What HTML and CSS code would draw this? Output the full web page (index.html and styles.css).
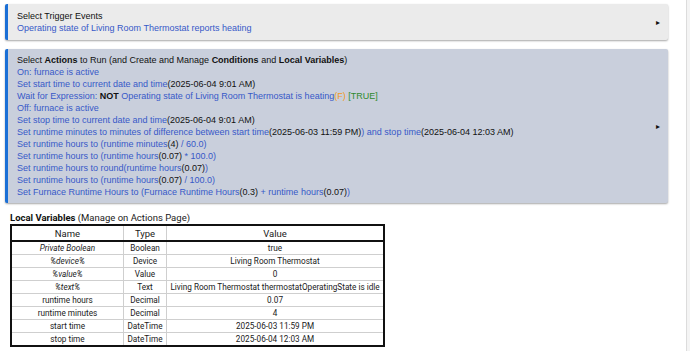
FILE: index.html
```html
<!DOCTYPE html>
<html lang="en">
<head>
    <meta charset="UTF-8">
    <meta name="viewport" content="width=device-width, initial-scale=1.0">
    <title>Rule Machine</title>
    <link rel="stylesheet" href="styles.css">
</head>
<body>
    <div class="page">
        <div class="panel trigger">
            <div class="panel-body">
                <div class="title">Select Trigger Events</div>
                <div class="blue">Operating state of Living Room Thermostat reports heating</div>
            </div>
            <span class="arrow">&#9656;</span>
        </div>

        <div class="panel actions">
            <div class="panel-body">
                <div class="title">Select <b>Actions</b> to Run (and Create and Manage <b>Conditions</b> and <b>Local Variables</b>)</div>
                <div class="blue">On: furnace is active</div>
                <div class="blue">Set start time to current date and time<span class="val">(2025-06-04 9:01 AM)</span></div>
                <div class="blue">Wait for Expression: <b>NOT</b> Operating state of Living Room Thermostat is heating<span class="orange">(F)</span> <span class="green">[TRUE]</span></div>
                <div class="blue">Off: furnace is active</div>
                <div class="blue">Set stop time to current date and time<span class="val">(2025-06-04 9:01 AM)</span></div>
                <div class="blue">Set runtime minutes to minutes of difference between start time<span class="val">(2025-06-03 11:59 PM)</span>) and stop time<span class="val">(2025-06-04 12:03 AM)</span></div>
                <div class="blue">Set runtime hours to (runtime minutes<span class="val">(4)</span> / 60.0)</div>
                <div class="blue">Set runtime hours to (runtime hours<span class="val">(0.07)</span> * 100.0)</div>
                <div class="blue">Set runtime hours to round(runtime hours<span class="val">(0.07)</span>)</div>
                <div class="blue">Set runtime hours to (runtime hours<span class="val">(0.07)</span> / 100.0)</div>
                <div class="blue">Set Furnace Runtime Hours to (Furnace Runtime Hours<span class="val">(0.3)</span> + runtime hours<span class="val">(0.07)</span>)</div>
            </div>
            <span class="arrow">&#9656;</span>
        </div>

        <div class="vars">
            <div class="vars-label"><b>Local Variables</b> (Manage on Actions Page)</div>
            <table class="vars-table">
                <thead>
                    <tr><th class="c-name">Name</th><th class="c-type">Type</th><th>Value</th></tr>
                </thead>
                <tbody>
                    <tr><td><i>Private Boolean</i></td><td>Boolean</td><td>true</td></tr>
                    <tr><td><i>%device%</i></td><td>Device</td><td>Living Room Thermostat</td></tr>
                    <tr><td><i>%value%</i></td><td>Value</td><td>0</td></tr>
                    <tr><td><i>%text%</i></td><td>Text</td><td>Living Room Thermostat thermostatOperatingState is idle</td></tr>
                    <tr><td>runtime hours</td><td>Decimal</td><td>0.07</td></tr>
                    <tr><td>runtime minutes</td><td>Decimal</td><td>4</td></tr>
                    <tr><td>start time</td><td>DateTime</td><td>2025-06-03 11:59 PM</td></tr>
                    <tr><td>stop time</td><td>DateTime</td><td>2025-06-04 12:03 AM</td></tr>
                </tbody>
            </table>
        </div>
    </div>
    <div class="scrollbar"></div>
</body>
</html>
```

FILE: styles.css
```css
html, body {
    margin: 0;
    height: 100%;
    background: #fff;
}
body {
    font-family: "Liberation Sans", Arial, sans-serif;
    font-size: 9px;
    color: #111;
    overflow: hidden;
}
.page {
    width: 663px;
    padding: 4px 0 0 5px;
}
.panel {
    display: flex;
    align-items: center;
    border-left: 3px solid #1a6fd6;
    border-radius: 2px;
    box-shadow: 0 1px 2px rgba(0, 0, 0, 0.35);
    margin-bottom: 9px;
}
.trigger {
    background: #ebebeb;
    padding: 6px 0 6px 9px;
}
.actions {
    background: #c9cfdc;
    padding: 5px 0 5px 9px;
}
.panel-body {
    flex: 1;
    line-height: 12px;
}
.blue {
    color: #3759c8;
}
b {
    color: #111;
}
.val {
    color: #111;
}
.orange {
    color: #f19a22;
}
.green {
    color: #2f8a2f;
}
.arrow {
    font-size: 8px;
    color: #111;
    margin-right: 8px;
}
.vars {
    padding: 0 0 0 5px;
    font-family: Roboto, "Liberation Sans", sans-serif;
    font-size: 8.2px;
    color: #1a1a1a;
}
.vars-label {
    font-size: 9.5px;
    line-height: 12px;
}
.vars-table {
    border-collapse: collapse;
    border: 2px solid #111;
    width: 375px;
}
.vars-table th,
.vars-table td {
    border: 1px solid #cfcfcf;
    text-align: center;
    padding: 0;
    height: 12px;
    white-space: nowrap;
}
.vars-table th {
    font-weight: normal;
    font-size: 9.5px;
    height: 14px;
    border-bottom: 2px solid #111;
}
.c-name {
    width: 111px;
}
.c-type {
    width: 42px;
}
.scrollbar {
    position: fixed;
    top: 0;
    right: 0;
    width: 3px;
    height: 100%;
    background: #f4f4f4;
    border-left: 1px solid #dcdcdc;
}
```
